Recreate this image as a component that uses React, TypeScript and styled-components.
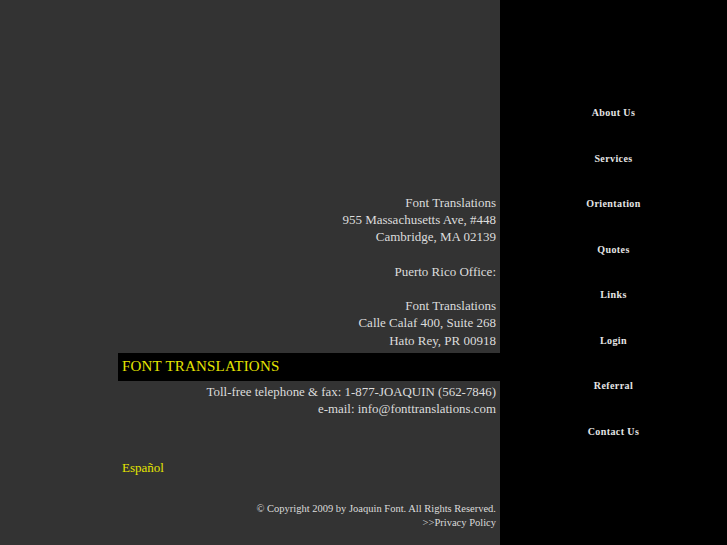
import React from "react";
import styled, { createGlobalStyle } from "styled-components";

const GlobalStyle = createGlobalStyle`
  html, body {
    margin: 0;
    padding: 0;
    height: 100%;
    background: #000;
  }
  #root {
    height: 100%;
  }
`;

const Page = styled.div`
  display: flex;
  height: 545px;
  font-family: "Liberation Serif", "Times New Roman", serif;
`;

const Main = styled.main`
  width: 500px;
  background-color: #333333;
  display: flex;
  flex-direction: column;
  padding: 194px 4px 0 118px;
  box-sizing: border-box;
`;

const Side = styled.nav`
  flex: 1;
  background-color: #000;
  display: flex;
  flex-direction: column;
  align-items: center;
  padding: 106px 0 0 0;
  box-sizing: border-box;
`;

const MenuItem = styled.a`
  display: block;
  height: 45.5px;
  color: #e6e6e6;
  font-size: 10px;
  font-weight: 700;
  letter-spacing: 0.4px;
  text-decoration: none;
  line-height: 14px;
`;

const Address = styled.div`
  display: flex;
  flex-direction: column;
  align-items: flex-end;
  color: #dcdcdc;
  font-size: 13px;
  line-height: 17.2px;
`;

const Line = styled.div<{ gapBefore?: boolean }>`
  margin-top: ${(props) => (props.gapBefore ? "17.2px" : "0")};
`;

const Banner = styled.div`
  background-color: #000;
  height: 28px;
  margin: 4px -4px 0 0;
  display: flex;
  align-items: center;
  padding-left: 4px;
  color: #e5e500;
  font-size: 15px;
  letter-spacing: 0.2px;
`;

const Contact = styled(Address)`
  margin-top: 3px;
  font-size: 12.9px;
`;

const Lang = styled.a`
  color: #e5e500;
  font-size: 13px;
  margin: 42px 0 0 4px;
  text-decoration: none;
`;

const Footer = styled.div`
  display: flex;
  flex-direction: column;
  align-items: flex-end;
  color: #dcdcdc;
  font-size: 10.5px;
  line-height: 13.5px;
  margin-top: 26px;
`;

const menu = [
  "About Us",
  "Services",
  "Orientation",
  "Quotes",
  "Links",
  "Login",
  "Referral",
  "Contact Us",
];

export default function App() {
  return (
    <>
      <GlobalStyle />
      <Page>
        <Main>
          <Address>
            <Line>Font Translations</Line>
            <Line>955 Massachusetts Ave, #448</Line>
            <Line>Cambridge, MA 02139</Line>
            <Line gapBefore>Puerto Rico Office:</Line>
            <Line gapBefore>Font Translations</Line>
            <Line>Calle Calaf 400, Suite 268</Line>
            <Line>Hato Rey, PR 00918</Line>
          </Address>
          <Banner>FONT TRANSLATIONS</Banner>
          <Contact>
            <Line>Toll-free telephone &amp; fax: 1-877-JOAQUIN (562-7846)</Line>
            <Line>e-mail: info@fonttranslations.com</Line>
          </Contact>
          <Lang href="#">Español</Lang>
          <Footer>
            <div>© Copyright 2009 by Joaquin Font. All Rights Reserved.</div>
            <div>&gt;&gt;Privacy Policy</div>
          </Footer>
        </Main>
        <Side>
          {menu.map((m) => (
            <MenuItem key={m} href="#">
              {m}
            </MenuItem>
          ))}
        </Side>
      </Page>
    </>
  );
}
